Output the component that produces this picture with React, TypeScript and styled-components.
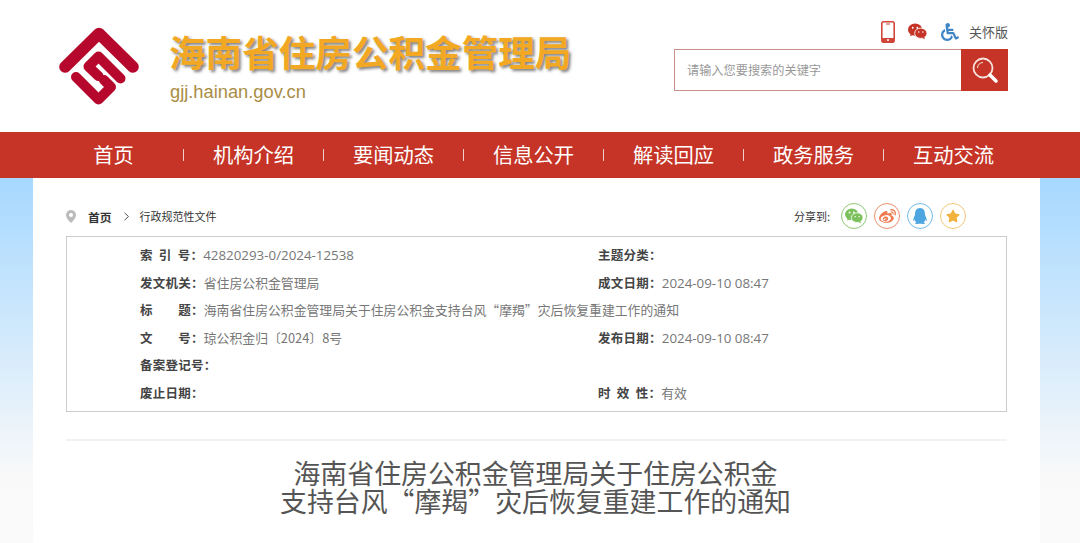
import React from "react";
import styled, { createGlobalStyle } from "styled-components";
import { FaWheelchair, FaWeibo, FaQq, FaStar } from "react-icons/fa";

const Global = createGlobalStyle`
  html, body { margin: 0; padding: 0; background: #fff; }
  body { font-family: "Noto Sans CJK SC", "Noto Sans", sans-serif; height: 543px; overflow: hidden; }
`;
const Header = styled.header`
  height: 132px; display: flex; justify-content: space-between; box-sizing: border-box; padding: 16px 72px 0 58px; background: #fff;
`;
const Brand = styled.div`display: flex; gap: 29px; align-items: flex-start; margin-top: 10px;`;
const BrandText = styled.div`display: flex; flex-direction: column; padding-top: 4px;`;
const SiteName = styled.div`
  font-size: 36.6px; line-height: 44px; font-weight: 700; color: #f2a823; text-shadow: 2px 2px 3px rgba(0,0,0,.5); white-space: nowrap;
`;
const Domain = styled.div`
  font-family: "Liberation Sans", sans-serif; font-size: 18.3px; line-height: 22px; margin: 7px 0 0 1px; color: #a98d45;
`;
const Tools = styled.div`display: flex; flex-direction: column; align-items: flex-end; width: 334px;`;
const ToolRow = styled.div`display: flex; align-items: center; height: 31px; color: #555; font-size: 13px;`;
const ToolIcon = styled.span<{ $gap: number; $c: string }>`display: flex; margin-left: ${p => p.$gap}px; color: ${p => p.$c};`;
const Care = styled.span`margin-left: 10px;`;
const SearchBox = styled.div`
  display: flex; width: 334px; height: 42px; box-sizing: border-box; border: 1px solid #c8918a; margin-top: 2px;
`;
const SearchText = styled.div`flex: 1; padding-left: 12px; display: flex; align-items: center; font-size: 12.2px; color: #999;`;
const SearchBtn = styled.div`width: 47px; margin: -1px; background: #c53426; display: flex; align-items: center; justify-content: center;`;
const Nav = styled.nav`
  height: 46px; background: #c53426; display: flex; padding-left: 44px; align-items: center;
`;
const NavItem = styled.div`
  width: 139px; text-align: center; color: #fff; font-size: 20.3px; line-height: 44px; padding-bottom: 2px; white-space: nowrap;
`;
const NavSep = styled.i`width: 1px; height: 12px; background: #f0cfc9; display: block;`;
const Page = styled.div`
  height: 365px; background: linear-gradient(#a6d8ff 0, #f9f9f9 300px, #fafafa 100%); padding-left: 33px; box-sizing: border-box;
`;
const Sheet = styled.main`width: 1007px; height: 365px; background: #fff; padding: 25px 33px 0; box-sizing: border-box;`;
const CrumbBar = styled.div`display: flex; align-items: center; justify-content: space-between; height: 26px; margin-bottom: 7px;`;
const Crumbs = styled.div`display: flex; align-items: center;`;
const PinWrap = styled.span`display: flex; width: 10px; margin-right: 12px;`;
const CrumbHome = styled.b`font-size: 11.8px; color: #333; font-weight: 700;`;
const CrumbArrow = styled.span`display: flex; margin: 0 10px 0 11px;`;
const CrumbLeaf = styled.span`font-size: 11px; color: #333;`;
const Share = styled.div`display: flex; align-items: center; gap: 7px; padding-right: 41px;`;
const ShareLabel = styled.span`font-size: 11px; color: #333; margin-right: 4px;`;
const ShareBtn = styled.span<{ $c: string; $b: string; $s: number }>`
  width: 26px; height: 26px; box-sizing: border-box; border-radius: 50%; border: 1px solid ${p => p.$b}; color: ${p => p.$c};
  display: flex; align-items: center; justify-content: center; font-size: ${p => p.$s}px;
`;
const InfoBox = styled.section`
  border: 1px solid #ccc; height: 176px; box-sizing: border-box; padding: 4.6px 0 0 73px;
  display: grid; grid-template-columns: 458px 1fr; grid-auto-rows: 27.5px; align-items: center;
`;
const Field = styled.div<{ $wide?: boolean }>`
  display: flex; align-items: baseline; font-size: 12.5px; line-height: 20px; white-space: pre; ${p => p.$wide ? "grid-column: 1 / 3;" : ""}
`;
const Label = styled.b`font-weight: 700; color: #444; word-spacing: 3px; letter-spacing: .02em;`;
const Value = styled.span<{ $num?: boolean }>`
  color: #777; font-family: ${p => p.$num ? '"Open Sans", ' : ""}"Noto Sans CJK SC", sans-serif; font-size: ${p => p.$num ? "13.35px" : "12.85px"};
`;
const Divider = styled.hr`border: 0; height: 2px; background: #f2f2f2; margin: 27px 0 0;`;
const Title = styled.h1`
  margin: 18px 0 0; padding-right: 2px; text-align: center; font-weight: 400; font-size: 26.9px; line-height: 28px; color: #555;
`;

const Logo = () => (
  <svg width="82" height="82" viewBox="0 0 82 82" fill="none" stroke="#b6082d" strokeWidth="11.6" strokeLinecap="round" strokeLinejoin="round">
    <path d="M7 41 L41 7.5 L75 41" />
    <path d="M62.5 52.5 L40.5 30.5 L30.5 40.5 L40.5 50" strokeWidth="10" />
    <path d="M18 51 L40.5 73.5 L53 61 L46 54" strokeWidth="10" />
  </svg>
);

const WeChat = ({ size }: { size: number }) => (
  <svg width={size} height={size * 0.85} viewBox="0 0 20 17">
    <ellipse cx="7.5" cy="7" rx="7.5" ry="6.5" fill="currentColor" />
    <path d="M3 11l-.8 3 3.4-1.7z" fill="currentColor" />
    <ellipse cx="13.5" cy="10.8" rx="6.5" ry="5.4" fill="currentColor" stroke="#fff" strokeWidth=".9" />
    <path d="M17 14.5l.8 2.5-3-1.4z" fill="currentColor" />
    <circle cx="5" cy="5" r="1" fill="#fff" />
    <circle cx="9.8" cy="5" r="1" fill="#fff" />
    <circle cx="11.3" cy="9.6" r=".8" fill="#fff" />
    <circle cx="15.7" cy="9.6" r=".8" fill="#fff" />
  </svg>
);

const navs = ["首页", "机构介绍", "要闻动态", "信息公开", "解读回应", "政务服务", "互动交流"];
type RowData = [string, string, boolean, string, string, boolean];
const rows: RowData[] = [
  ["索 引 号：", "42820293-0/2024-12538", true, "主题分类：", "", false],
  ["发文机关：", "省住房公积金管理局", false, "成文日期：", "2024-09-10 08:47", true],
];
const rows2: RowData[] = [
  ["文　　号：", "琼公积金归〔2024〕8号", false, "发布日期：", "2024-09-10 08:47", true],
  ["备案登记号：", "", false, "", "", false],
  ["废止日期：", "", false, "时 效 性：", "有效", false],
];

const Row = ({ r }: { r: RowData }) => (
  <>
    <Field><Label>{r[0]}</Label><Value $num={r[2]}>{r[1]}</Value></Field>
    <Field><Label>{r[3]}</Label><Value $num={r[5]}>{r[4]}</Value></Field>
  </>
);

export default function App() {
  return (
    <>
      <Global />
      <Header>
        <Brand>
          <Logo />
          <BrandText>
            <SiteName>海南省住房公积金管理局</SiteName>
            <Domain>gjj.hainan.gov.cn</Domain>
          </BrandText>
        </Brand>
        <Tools>
          <ToolRow>
            <ToolIcon $gap={0} $c="#d2473b">
              <svg width="14" height="22" viewBox="0 0 14 22" fill="none">
                <rect x=".8" y=".8" width="12.4" height="20.4" rx="2" stroke="currentColor" strokeWidth="1.6" />
                <rect x="1" y="17" width="12" height="4" fill="currentColor" />
                <circle cx="7" cy="19" r="1" fill="#fff" />
                <path d="M5 3h4" stroke="currentColor" />
              </svg>
            </ToolIcon>
            <ToolIcon $gap={13} $c="#c53426"><WeChat size={19} /></ToolIcon>
            <ToolIcon $gap={14} $c="#3f86c6"><FaWheelchair size={18} /></ToolIcon>
            <Care>关怀版</Care>
          </ToolRow>
          <SearchBox>
            <SearchText>请输入您要搜索的关键字</SearchText>
            <SearchBtn>
              <svg width="28" height="28" viewBox="0 0 28 28" fill="none">
                <circle cx="12" cy="12" r="9.5" stroke="#f6e3df" strokeWidth="1.8" />
                <path d="M6.5 12a5.5 5.5 0 0 1 5.5-5.5" stroke="#f6e3df" strokeWidth="1" />
                <path d="M19 19l6 6" stroke="#fff" strokeWidth="3.6" strokeLinecap="round" />
              </svg>
            </SearchBtn>
          </SearchBox>
        </Tools>
      </Header>
      <Nav>
        {navs.map((n, i) => (
          <React.Fragment key={n}>
            {i > 0 && <NavSep />}
            <NavItem>{n}</NavItem>
          </React.Fragment>
        ))}
      </Nav>
      <Page>
        <Sheet>
          <CrumbBar>
            <Crumbs>
              <PinWrap>
                <svg width="10" height="13" viewBox="0 0 10 13">
                  <path d="M5 0a5 5 0 0 1 5 5c0 3-3 6-5 8-2-2-5-5-5-8a5 5 0 0 1 5-5z" fill="#bbb" />
                  <circle cx="5" cy="5" r="2" fill="#fff" />
                </svg>
              </PinWrap>
              <CrumbHome>首页</CrumbHome>
              <CrumbArrow>
                <svg width="7" height="9" viewBox="0 0 7 9" fill="none"><path d="M1.5 .8l4 3.7-4 3.7" stroke="#555" /></svg>
              </CrumbArrow>
              <CrumbLeaf>行政规范性文件</CrumbLeaf>
            </Crumbs>
            <Share>
              <ShareLabel>分享到:</ShareLabel>
              <ShareBtn $c="#7cc05c" $b="#8ec773" $s={18}><WeChat size={18} /></ShareBtn>
              <ShareBtn $c="#ee7b4f" $b="#ee8e6c" $s={17}><FaWeibo /></ShareBtn>
              <ShareBtn $c="#4da6e0" $b="#74bce8" $s={16}><FaQq /></ShareBtn>
              <ShareBtn $c="#f2b23e" $b="#f4c677" $s={14}><FaStar /></ShareBtn>
            </Share>
          </CrumbBar>
          <InfoBox>
            {rows.map(r => <Row key={r[0]} r={r} />)}
            <Field $wide><Label>标　　题：</Label><Value>海南省住房公积金管理局关于住房公积金支持台风“摩羯”灾后恢复重建工作的通知</Value></Field>
            {rows2.map(r => <Row key={r[0]} r={r} />)}
          </InfoBox>
          <Divider />
          <Title>海南省住房公积金管理局关于住房公积金<br />支持台风“摩羯”灾后恢复重建工作的通知</Title>
        </Sheet>
      </Page>
    </>
  );
}
